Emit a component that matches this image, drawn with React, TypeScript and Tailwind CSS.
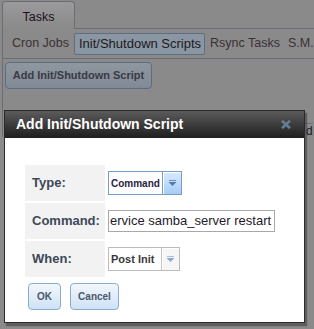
import React from "react";

const LINE = "border-[#6c6c76]";

function Arrow({ disabled }: { disabled?: boolean }) {
  return (
    <svg width="9" height="6" viewBox="0 0 9 6">
      <rect x="1" y="0" width="7" height="1" fill={disabled ? "#a9bde0" : "#6f8fc0"} />
      <path d="M0.5 2 L8.5 2 L4.5 6 Z" fill={disabled ? "#8aa6dc" : "#5478b0"} />
    </svg>
  );
}

function Field({ label, children }: { label: string; children: React.ReactNode }) {
  return (
    <>
      <div className="flex h-[36px] items-center bg-[#f2f2f2] pl-[7px] text-[13px] font-bold text-[#3d4856]">
        {label}
      </div>
      <div className="flex h-[36px] items-center">{children}</div>
    </>
  );
}

export default function App() {
  return (
    <div
      className="relative h-[329px] w-[314px] overflow-hidden bg-[#8a8a8a] text-[#2a2228]"
      style={{ fontFamily: '"Liberation Sans", Arial, sans-serif' }}
    >
      {/* page under the modal */}
      <div className="flex h-[29px] pt-[1px]">
        <div
          className={`ml-[2px] flex w-[73px] items-center justify-center rounded-t-[4px] border border-b-0 ${LINE} bg-gradient-to-b from-[#9a9a9c] to-[#8a8a8a] pt-[4px] text-[12.5px] text-[#1e1020]`}
        >
          Tasks
        </div>
        <div className={`flex-1 border-b ${LINE}`} />
      </div>
      <div className={`ml-[2px] border-l ${LINE}`}>
        <div className={`flex h-[30px] items-center whitespace-nowrap border-b ${LINE} pl-[9px] text-[12.5px] text-[#3a3036]`}>
          <span>Cron Jobs</span>
          <span className="ml-[5px] flex h-[22px] w-[131px] items-center rounded-[2px] border border-[#5e6e82] bg-[#8b96a3] pl-[4px] text-[13px] text-[#1c1a22]">
            Init/Shutdown Scripts
          </span>
          <span className="ml-[5px]">Rsync Tasks</span>
          <span className="ml-[8px]">S.M.</span>
        </div>
        <div className="ml-[2px] mt-[3px] flex h-[27px] w-[147px] items-center justify-center rounded-[4px] border border-[#5d6d80] bg-gradient-to-b from-[#8f96a0] to-[#808a96] text-[11px] font-bold text-[#3a3a44]">
          Add Init/Shutdown Script
        </div>
        <div className="ml-[301px] mt-[34px] flex h-[14px] w-[9px] items-end border-l border-t border-[#70707a] pl-[1px] text-[12px] leading-none text-[#1e1a22]">
          d
        </div>
      </div>

      {/* modal dialog */}
      <div className="absolute left-[4px] top-[110px] h-[213px] w-[301px] border border-[#2a2a2a] bg-white shadow-[2px_3px_1px_rgba(40,40,40,0.45)]">
        <div className="flex h-[27px] items-center justify-between bg-gradient-to-b from-[#5c5c5c] to-[#1f1f1f] pl-[11px] pr-[13px] text-[14px] font-bold text-white">
          <span>Add Init/Shutdown Script</span>
          <svg width="10" height="9" viewBox="0 0 10 9">
            <path d="M1 0.8 L9 8.2 M9 0.8 L1 8.2" stroke="#667d96" strokeWidth="2.6" />
          </svg>
        </div>
        <div className="pl-[20px] pt-[27px]">
          <div className="grid grid-cols-[80px_auto] gap-x-[3px] gap-y-[2px]">
            <Field label="Type:">
              <div className="flex h-[24px] border border-[#7b9cc2] bg-white">
                <div className="flex w-[53px] items-center pl-[2px] text-[10px] font-bold text-[#2b2440]">Command</div>
                <div className="flex w-[19px] items-center justify-center border-l border-[#7b9cc2] bg-gradient-to-b from-[#d9ebfd] to-[#a6ccf6] shadow-[inset_1px_1px_0_#ffffff]">
                  <Arrow />
                </div>
              </div>
            </Field>
            <Field label="Command:">
              <div className="flex h-[22px] w-[167px] items-center whitespace-nowrap border border-[#a8a8a8] pl-[1px] text-[13px] text-[#1e1a2a]">
                ervice samba_server restart
              </div>
            </Field>
            <Field label="When:">
              <div className="flex h-[24px] border border-[#bcbcbc] bg-white">
                <div className="flex w-[52px] items-center pl-[2px] text-[11px] font-bold text-[#3a3a3a]">Post Init</div>
                <div className="flex w-[18px] items-center justify-center border-l border-[#c4c4c4] bg-[#f6f6f6] shadow-[inset_1px_1px_0_#ffffff]">
                  <Arrow disabled />
                </div>
              </div>
            </Field>
          </div>
          <div className="mt-[6px] flex gap-[9px] pl-[3px]">
            <button className="h-[27px] w-[33px] rounded-[4px] border border-[#8aaccd] bg-gradient-to-b from-[#f2f7fd] to-[#cfe2f6] text-[10px] font-bold text-[#4b5868]">
              OK
            </button>
            <button className="h-[27px] w-[49px] rounded-[4px] border border-[#8aaccd] bg-gradient-to-b from-[#f2f7fd] to-[#cfe2f6] text-[10px] font-bold text-[#4b5868]">
              Cancel
            </button>
          </div>
        </div>
      </div>
    </div>
  );
}
